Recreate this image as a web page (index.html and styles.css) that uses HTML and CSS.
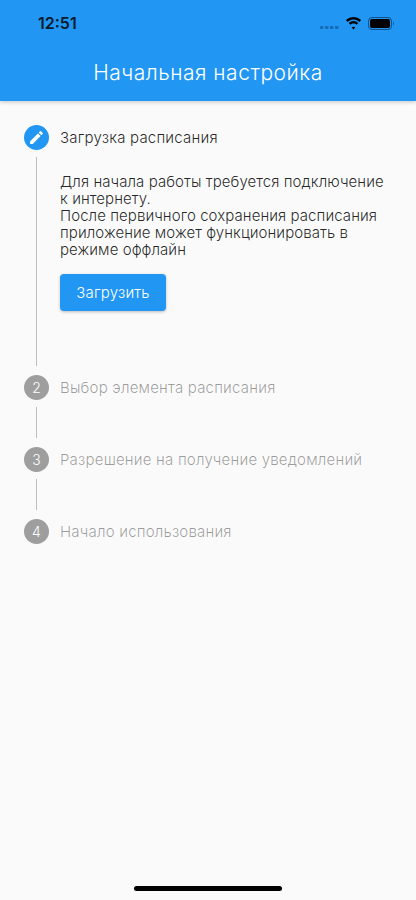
FILE: index.html
```html
<!DOCTYPE html>
<html lang="ru">
<head>
<meta charset="utf-8">
<title>Начальная настройка</title>
<link rel="stylesheet" href="styles.css">
</head>
<body>
<div class="screen">
  <header class="appbar">
    <div class="statusbar">
      <span class="time">12:51</span>
      <div class="status-icons">
        <svg class="cell" width="19" height="3" viewBox="0 0 19 3"><g fill="#0b3a66" fill-opacity=".45"><rect x="0" y="0" width="3.500" height="3" rx=".8"/><rect x="5" y="0" width="3.500" height="3" rx=".8"/><rect x="10" y="0" width="3.500" height="3" rx=".8"/><rect x="15" y="0" width="3.500" height="3" rx=".8"/></g></svg>
        <svg class="wifi" width="17" height="13" viewBox="0 0 17 13"><path fill="#000" d="M8.500 2.500c2.300 0 4.400.9 5.900 2.400l1.700-1.800A11 11 0 0 0 8.500 0 11 11 0 0 0 .9 3.100l1.700 1.800c1.500-1.500 3.600-2.400 5.900-2.400zM8.500 6.500c1.200 0 2.300.5 3.100 1.200l1.700-1.800a7 7 0 0 0-9.600 0l1.700 1.800c.8-.7 1.900-1.200 3.100-1.200zM8.500 9.700c-.8 0-1.300.3-1.800.7l1.800 2 1.800-2c-.5-.4-1-.7-1.800-.7z"/></svg>
        <svg class="battery" width="26" height="13" viewBox="0 0 26 13"><rect x=".5" y=".5" width="23" height="12" rx="3.500" fill="none" stroke="#0b3a66" stroke-opacity=".75"/><rect x="2" y="2" width="20" height="9" rx="2" fill="#000"/><path d="M25 4.500v4c.5-.3 1-1.100 1-2s-.5-1.700-1-2z" fill="#0b3a66" fill-opacity=".6"/></svg>
      </div>
    </div>
    <h1 class="title">Начальная настройка</h1>
  </header>
  <main class="stepper">
    <section class="step">
      <div class="step-head">
        <span class="badge badge-active">
          <svg width="17" height="17" viewBox="0 0 24 24"><path fill="#fff" d="M3 17.250V21h3.750L17.810 9.940l-3.750-3.750L3 17.250zM20.710 7.040a1 1 0 0 0 0-1.410l-2.340-2.340a1 1 0 0 0-1.410 0l-1.830 1.830 3.750 3.750 1.830-1.830z"/></svg>
        </span>
        <span class="label label-active">Загрузка расписания</span>
      </div>
      <div class="step-body body-open">
        <div class="content">
          <p class="text">Для начала работы требуется подключение к интернету.<br>После первичного сохранения расписания приложение может функционировать в режиме оффлайн</p>
          <button class="btn">Загрузить</button>
        </div>
      </div>
    </section>
    <section class="step">
      <div class="step-head"><span class="badge">2</span><span class="label">Выбор элемента расписания</span></div>
      <div class="step-body"></div>
    </section>
    <section class="step">
      <div class="step-head"><span class="badge">3</span><span class="label">Разрешение на получение уведомлений</span></div>
      <div class="step-body"></div>
    </section>
    <section class="step">
      <div class="step-head"><span class="badge">4</span><span class="label">Начало использования</span></div>
    </section>
  </main>
  <div class="home-indicator"></div>
</div>
</body>
</html>
```
FILE: styles.css
```css
* { box-sizing: border-box; }
html, body { margin: 0; padding: 0; }
body { font-family: "Inter", "Noto Sans", sans-serif; background: #fafafa; }
.screen { width: 416px; height: 900px; position: relative; overflow: hidden; background: #fafafa; display: flex; flex-direction: column; }
.appbar { background: #2196f3; height: 101px; box-shadow: 0 1px 4px rgba(0,0,0,.22); display: flex; flex-direction: column; color: #fff; flex: none; }
.statusbar { height: 46px; padding: 0 22px 0 38px; display: flex; align-items: center; justify-content: space-between; }
.time { font-family: "Inter", sans-serif; font-size: 16px; font-weight: 600; color: #0a1a2a; }
.status-icons { display: flex; align-items: center; gap: 6px; }
.cell { margin-top: 9px; }
.title { margin: 0; flex: 1; font-size: 21px; font-weight: 300; text-align: center; line-height: 54px; letter-spacing: .5px; }
.stepper { padding: 24px 24px 0; display: flex; flex-direction: column; }
.step-head { display: flex; align-items: center; gap: 11px; height: 25px; }
.badge { width: 25px; height: 25px; border-radius: 50%; background: #9e9e9e; color: #fff; font-size: 14px; font-weight: 300; display: flex; align-items: center; justify-content: center; flex: none; }
.badge-active { background: #2196f3; }
.label { font-size: 15px; font-weight: 300; color: rgba(0,0,0,.38); letter-spacing: .2px; }
.label-active { color: rgba(0,0,0,.85); }
.step-body { margin-left: 12px; border-left: 1px solid #bdbdbd; height: 31px; margin-top: 7px; margin-bottom: 9px; }
.body-open { height: 209px; }
.content { padding: 16px 0 0 23px; }
.text { margin: 0; font-size: 15px; font-weight: 300; line-height: 17px; color: rgba(0,0,0,.85); letter-spacing: .07px; }
.btn { margin-top: 16px; width: 106px; height: 37px; border: 0; border-radius: 4px; background: #2196f3; color: #fff; font: inherit; font-size: 15px; font-weight: 300; letter-spacing: .2px; box-shadow: 0 1px 3px rgba(0,0,0,.25); }
.home-indicator { position: absolute; left: 134px; bottom: 9px; width: 148px; height: 5px; border-radius: 3px; background: #000; }
```
